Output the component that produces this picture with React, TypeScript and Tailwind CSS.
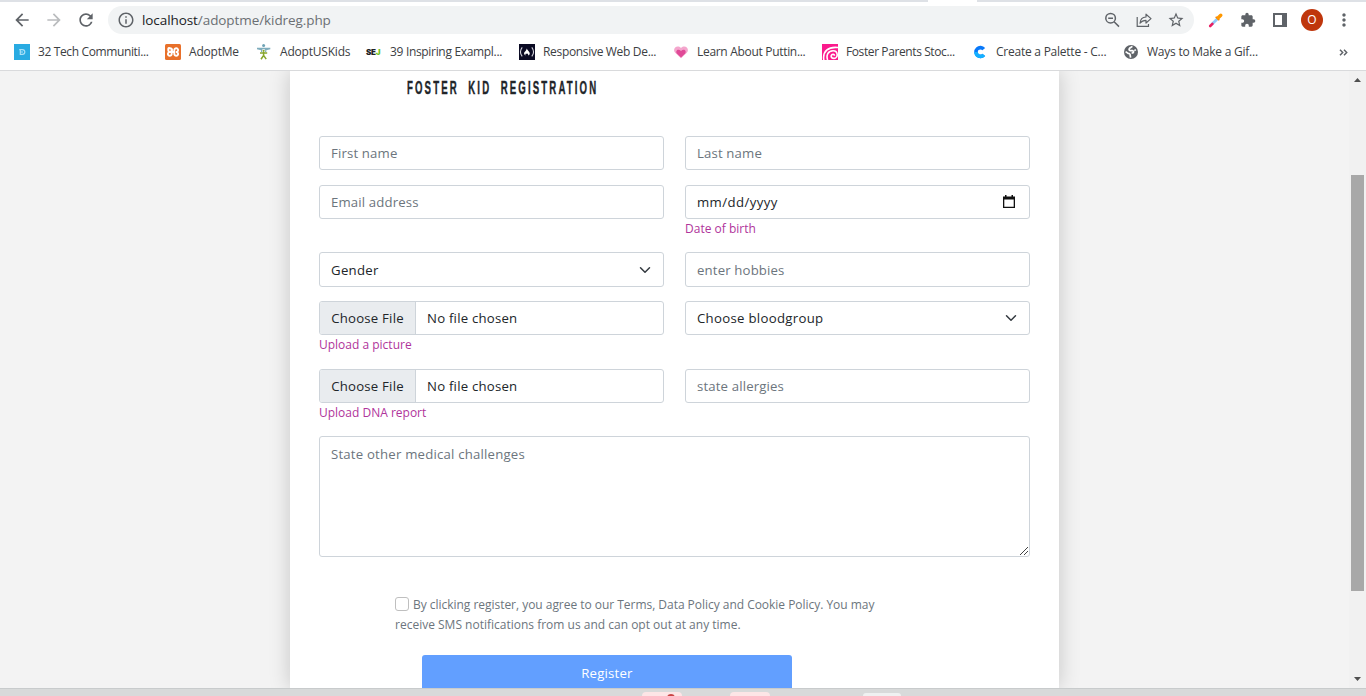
import React from 'react';
import { MdArrowBack, MdArrowForward, MdRefresh, MdInfoOutline, MdStarBorder, MdExtension, MdMoreVert } from 'react-icons/md';

function ZoomOutIcon() {
  return (
    <svg className="h-[18px] w-[18px]" viewBox="0 0 18 18" fill="none" stroke="#5f6368" strokeWidth="1.5">
      <circle cx="7.6" cy="7.2" r="4.8" />
      <path d="M11.1 10.7L16 15.6M5.2 7.2H10" />
    </svg>
  );
}

function ShareIcon() {
  return (
    <svg className="h-4 w-4" viewBox="0 0 16 16" fill="none" stroke="#5f6368" strokeWidth="1.2">
      <path d="M1.2 5V14.4H12.5V12" />
      <path d="M4 11.2C4.3 7.4 6.4 5.2 10 5V2.2L15 6.6L10 11V8.4C7.3 8.4 5.5 9.2 4 11.2Z" strokeLinejoin="round" />
    </svg>
  );
}

function DropperIcon() {
  return (
    <svg className="h-4 w-4" viewBox="0 0 16 16">
      <path d="M3.6 12.6L10 6.2" stroke="#90caf9" strokeWidth="2.8" />
      <path d="M2.2 14L4.4 11.8" stroke="#e91e63" strokeWidth="2.6" strokeLinecap="round" />
      <path d="M7.7 4.7L11.3 8.3" stroke="#f57c00" strokeWidth="1.6" />
      <path d="M10.2 5.8L12.8 3.2" stroke="#ff9800" strokeWidth="3.4" strokeLinecap="round" />
    </svg>
  );
}

const BlueD = () => (
  <svg className="h-4 w-4" viewBox="0 0 16 16">
    <rect width="16" height="16" fill="#29abe2" />
    <path d="M5.2 5.6H8.4A2.3 2.3 0 0 1 8.4 10.4H6.3V5.6M6.3 8H9" stroke="#a9e0f7" strokeWidth="1.2" fill="none" />
  </svg>
);
const Xampp = () => (
  <svg className="h-4 w-4" viewBox="0 0 16 16">
    <rect width="16" height="16" rx="1.5" fill="#e8702a" />
    <g fill="none" stroke="#fff" strokeWidth="1.9" strokeLinecap="round">
      <path d="M3.6 4.2H5A1.9 1.9 0 0 1 5 8A1.9 1.9 0 1 0 6.7 9.9V8H9.3V9.9A1.9 1.9 0 1 0 11 8A1.9 1.9 0 1 0 9.3 6.1V8" />
      <path d="M6.7 8V5.5M4.2 4.2Q3.2 4.2 3.2 5.5Q3.2 8 5 8" />
    </g>
  </svg>
);
const Kids = () => (
  <svg className="h-4 w-4" viewBox="0 0 16 16">
    <circle cx="7.6" cy="1.6" r="1.5" fill="#6fa3b5" />
    <path d="M1 3.7H14.3V5.3L10.3 6.2V8H5V6.2L1 5.3Z" fill="#7fadbd" />
    <circle cx="7.6" cy="6.8" r="1.7" fill="#fff" />
    <circle cx="7.6" cy="6.8" r="1.1" fill="#86a52b" />
    <path d="M4 9H11.2M7.6 8V11.5L5 15.2M7.6 11.3L10.2 15.2" stroke="#86a52b" strokeWidth="1.5" fill="none" />
  </svg>
);
const Sej = () => (
  <span className="flex h-4 w-4 items-center font-['Inter'] text-[8px] font-black tracking-[-0.3px] text-[#202124]">
    SE<span className="text-[#6cc11b]">J</span>
  </span>
);
const Camp = () => (
  <svg className="h-4 w-4" viewBox="0 0 16 16">
    <rect width="16" height="16" fill="#0a0a23" />
    <path d="M3.2 3.4Q-0.3 8 3.2 12.4M12.8 3.4Q16.3 8 12.8 12.4" fill="none" stroke="#d4d4dc" strokeWidth="1.1" />
    <path d="M7.7 4.4C8.3 6.2 10.8 7.5 10.8 9.4Q10.8 10.9 9.2 11.5Q9.6 10.2 8.4 9.4Q7.6 10.2 6.9 9.6Q5.9 10.5 6.6 11.5Q5 10.8 5 9.3C5 7.6 7.7 6.7 7.7 4.4Z" fill="#fff" />
  </svg>
);
const Heart = () => (
  <svg className="h-4 w-4" viewBox="0 0 16 16">
    <path d="M8 14.2L2.2 8.8C-1.2 5.2 3.8-0.1 8 3.9C12.2-0.1 17.2 5.2 13.8 8.8Z" fill="#f4a6cd" />
    <path d="M8 13.5L3.8 9.4C2 7 5 4.2 8 7C11 4.2 14 7 12.2 9.4Z" fill="#e04a97" />
  </svg>
);
const Swirl = () => (
  <svg className="h-4 w-4" viewBox="0 0 16 16">
    <rect width="16" height="16" fill="#fb1a8c" />
    <path d="M1.8 16C0.5 7.5 6 2.4 16 3.5M5.6 16C4 11 6 7 11 6.8C16.3 6.7 16.5 14.2 12 14.4C8.4 14.4 8.3 10.4 11.2 10.2Q12.4 10.2 12.5 11.8" fill="none" stroke="#fff" strokeWidth="1.6" />
  </svg>
);
const BlueC = () => (
  <svg className="h-4 w-4" viewBox="0 0 16 16">
    <path d="M11.8 5.2A4.4 4.4 0 1 0 11.8 10.8" fill="none" stroke="#0878f9" strokeWidth="3.6" />
    <path d="M4 8A4.4 4.4 0 0 0 11.8 10.8" fill="none" stroke="#14b0ff" strokeWidth="3.6" />
  </svg>
);
const Globe = () => (
  <svg className="h-4 w-4" viewBox="0 0 16 16">
    <circle cx="8" cy="8" r="7" fill="#5f6368" />
    <path d="M9.4 2.4L6.6 4.2Q5.4 5.8 7 6.6H9.6Q11 7.2 10.4 8.6L8.6 9.3M2.6 7.6L5.2 9.4Q7.4 9.6 7.2 11.4L7.6 13.6M12.8 5.6L11.4 6.6" stroke="#fff" strokeWidth="1.7" fill="none" />
  </svg>
);

const bookmarks = [
  { icon: <BlueD />, label: '32 Tech Communiti...', w: 'w-[151px]', t: 'tracking-[-0.37px]' },
  { icon: <Xampp />, label: 'AdoptMe', w: 'w-[91px]', t: 'tracking-[-0.2px]' },
  { icon: <Kids />, label: 'AdoptUSKids', w: 'w-[110px]', t: 'tracking-[-0.2px]' },
  { icon: <Sej />, label: '39 Inspiring Exampl...', w: 'w-[153px]', t: 'tracking-[-0.32px]' },
  { icon: <Camp />, label: 'Responsive Web De...', w: 'w-[154px]', t: 'tracking-[-0.32px]' },
  { icon: <Heart />, label: 'Learn About Puttin...', w: 'w-[149px]', t: 'tracking-[-0.31px]' },
  { icon: <Swirl />, label: 'Foster Parents Stoc...', w: 'w-[150px]', t: 'tracking-[-0.4px]' },
  { icon: <BlueC />, label: 'Create a Palette - C...', w: 'w-[151px]', t: 'tracking-[-0.24px]' },
  { icon: <Globe />, label: 'Ways to Make a Gif...', w: 'w-[150px]', t: 'tracking-[-0.24px]' },
];

function BrowserBar() {
  return (
    <header className="h-[71px] shrink-0 border-b border-[#d9dadc] bg-white">
      <div className="flex h-0.5">
        <div className="w-[928px] bg-[#dee1e6]" />
        <div className="w-[49px] bg-white" />
        <div className="flex-1 bg-[#dee1e6]" />
      </div>
      <div className="flex h-9 items-center text-[#5f6368]">
        <MdArrowBack className="ml-3 h-5 w-5" />
        <MdArrowForward className="ml-3 h-5 w-5 text-[#babcbe]" />
        <MdRefresh className="ml-3 h-5 w-5" />
        <div className="ml-3 flex h-7 w-[1086px] items-center rounded-full bg-[#f1f3f4]">
          <MdInfoOutline className="ml-[9px] h-[18px] w-[18px]" />
          <span className="ml-[7px] flex-1 text-[13.5px] tracking-[-0.08px] text-[#6b6f73]">
            <span className="text-[#202124]">localhost</span>/adoptme/kidreg.php
          </span>
          <ZoomOutIcon />
          <div className="ml-[15px]"><ShareIcon /></div>
          <MdStarBorder className="mr-[9px] ml-[15px] h-[18px] w-[18px]" />
        </div>
        <div className="ml-[14px]"><DropperIcon /></div>
        <MdExtension className="ml-4 h-4 w-4" />
        <div className="ml-[17px] h-[14px] w-[14px] border-2 border-r-[5px] border-[#5f6368]" />
        <div className="ml-[14px] flex h-[22px] w-[22px] items-center justify-center rounded-full bg-[#bf360c] text-xs text-white">O</div>
        <MdMoreVert className="ml-[11px] h-5 w-5" />
      </div>
      <nav className="flex h-7 items-center pl-[14px] text-[12px] text-[#3c4043]">
        {bookmarks.map((b) => (
          <div key={b.label} className={`flex shrink-0 items-center gap-2 whitespace-nowrap ${b.w}`}>
            {b.icon}
            <span className={b.t}>{b.label}</span>
          </div>
        ))}
        <svg className="ml-[66px] h-[7px] w-[9px]" viewBox="0 0 9 7" fill="none" stroke="#5f6368" strokeWidth="1.5">
          <path d="M1 .7L3.7 3.5L1 6.3M5 .7L7.7 3.5L5 6.3" />
        </svg>
      </nav>
    </header>
  );
}

const box = 'w-full rounded-[3px] border border-[#ced4da] bg-white text-[13.2px] text-[#212529]';

const TextField = ({ hint, tall = false }: { hint: string; tall?: boolean }) => (
  <input className={`${box} ${tall ? 'h-[35px] pt-px' : 'h-[34px]'} block px-[11px] tracking-[0.15px] outline-none placeholder:text-[#6c757d]`} placeholder={hint} />
);

const SelectField = ({ label, tall = false }: { label: string; tall?: boolean }) => (
  <button className={`${box} ${tall ? 'h-[35px] pt-0.5' : 'h-[34px] pt-px'} flex items-center justify-between pr-3 pl-[11px] tracking-[0.3px]`}>
    {label}
    <svg className="mb-0.5 h-3 w-3" viewBox="0 0 16 16" fill="none" stroke="#343a40" strokeWidth="2" strokeLinecap="round" strokeLinejoin="round">
      <path d="M2 5l6 6 6-6" />
    </svg>
  </button>
);

const DateField = () => (
  <div className={`${box} flex h-[34px] items-center justify-between pr-[14px] pl-[11px] pt-px tracking-[0.4px]`}>
    mm/dd/yyyy
    <svg className="mb-[3px] h-[13px] w-3" viewBox="0 0 12 13">
      <path d="M0 1.5H2V0H3.5V1.5H8.5V0H10V1.5H12V13H0ZM1.3 4.5V11.7H10.7V4.5Z" fill="#111" fillRule="evenodd" />
    </svg>
  </div>
);

const FileField = () => (
  <div className={`${box} flex h-[34px] items-center overflow-hidden tracking-[0.22px]`}>
    <button className="h-full w-24 border-r border-[#ced4da] bg-[#e9ecef] pt-px">Choose File</button>
    <span className="ml-[11px] pt-px">No file chosen</span>
  </div>
);

const Caption = ({ children }: { children: React.ReactNode }) => (
  <div className="h-[19px] text-[12px] leading-[19px] text-[#b0349b]">{children}</div>
);

function RegistrationForm() {
  return (
    <form className="w-[769px] overflow-hidden bg-white px-[29px] shadow-[0_0_20px_rgba(0,0,0,0.19)]" onSubmit={(e) => e.preventDefault()}>
      <h1 className="ml-[88px] h-[65px] origin-left scale-x-[0.52] pt-[4px] font-['Liberation_Sans'] text-[18.5px] leading-[26px] font-bold tracking-[4.1px] whitespace-nowrap text-[#212529] [-webkit-text-stroke:0.4px_#212529] [word-spacing:9px]">
        FOSTER KID REGISTRATION
      </h1>
      <div className="grid grid-cols-[345px_345px] gap-x-[21px]">
        <div className="h-[49px]"><TextField hint="First name" /></div>
        <div className="h-[49px]"><TextField hint="Last name" /></div>
        <div className="h-[67px]"><TextField hint="Email address" /></div>
        <div className="h-[67px]"><DateField /><Caption>Date of birth</Caption></div>
        <div className="h-[49px]"><SelectField label="Gender" tall /></div>
        <div className="h-[49px]"><TextField hint="enter hobbies" tall /></div>
        <div className="h-[68px]"><FileField /><Caption>Upload a picture</Caption></div>
        <div className="h-[68px]"><SelectField label="Choose bloodgroup" /></div>
        <div className="h-[67px]"><FileField /><Caption>Upload DNA report</Caption></div>
        <div className="h-[67px]"><TextField hint="state allergies" /></div>
      </div>
      <div className="relative h-[121px]">
        <textarea className="block h-full w-full resize-none rounded-[3px] border border-[#ced4da] px-[11px] py-[7px] text-[13.2px] leading-5 tracking-[0.2px] outline-none placeholder:text-[#6c757d]" placeholder="State other medical challenges" />
        <svg className="absolute right-0.5 bottom-0.5 h-2 w-2" viewBox="0 0 8 8" stroke="#444" strokeWidth="1">
          <path d="M0 8L8 0M4 8L8 4" />
        </svg>
      </div>
      <label className="mt-[38px] ml-[76px] block w-[500px] text-[12px] leading-5 text-[#6c757d]">
        <span className="flex items-center gap-1 whitespace-nowrap">
          <span className="mb-0.5 h-[14px] w-[14px] rounded-[3px] border border-[#bfbfbf]" />
          <span className="tracking-[-0.03px]">By clicking register, you agree to our Terms, Data Policy and Cookie Policy. You may</span>
        </span>
        <span>receive SMS notifications from us and can opt out at any time.</span>
      </label>
      <button className="mt-[20px] ml-[103px] block h-[37px] w-[370px] rounded-[3px] bg-[#629fff] text-[13.2px] font-medium tracking-[0.2px] text-white">Register</button>
    </form>
  );
}

function Scrollbar() {
  return (
    <div className="flex w-[17px] flex-col items-center justify-between bg-[#f1f1f1]">
      <svg className="mt-[7px] h-1 w-[7px]" viewBox="0 0 7 4"><path d="M3.5 0L7 4H0Z" fill="#505050" /></svg>
      <div className="mt-[93px] mb-auto h-[416px] w-[13px] bg-[#a8a8a8]" />
      <svg className="mb-[7px] h-1 w-[7px]" viewBox="0 0 7 4"><path d="M3.5 4L7 0H0Z" fill="#505050" /></svg>
    </div>
  );
}

export default function App() {
  return (
    <div className="flex h-[696px] w-[1366px] flex-col overflow-hidden bg-white font-['Open_Sans','Noto_Sans',sans-serif]">
      <BrowserBar />
      <main className="flex h-[617px] overflow-hidden bg-[#f3f3f3]">
        <div className="flex flex-1 overflow-hidden pl-[290px]"><RegistrationForm /></div>
        <Scrollbar />
      </main>
      <footer className="flex h-2 items-end border-t border-[#c8cbcc] bg-[#d8dada] pl-[642px]">
        <div className="flex h-1 w-10 justify-center overflow-hidden rounded-t-sm bg-[#fde5e6]">
          <span className="mt-[2px] ml-[18px] h-2 w-2 rounded-full bg-[#c94343]" />
        </div>
        <div className="ml-12 h-1 w-10 rounded-t-sm bg-[#fde5e6]" />
        <div className="ml-[93px] h-[3px] w-[38px] rounded-t-sm bg-[#eff1f1]" />
      </footer>
    </div>
  );
}
